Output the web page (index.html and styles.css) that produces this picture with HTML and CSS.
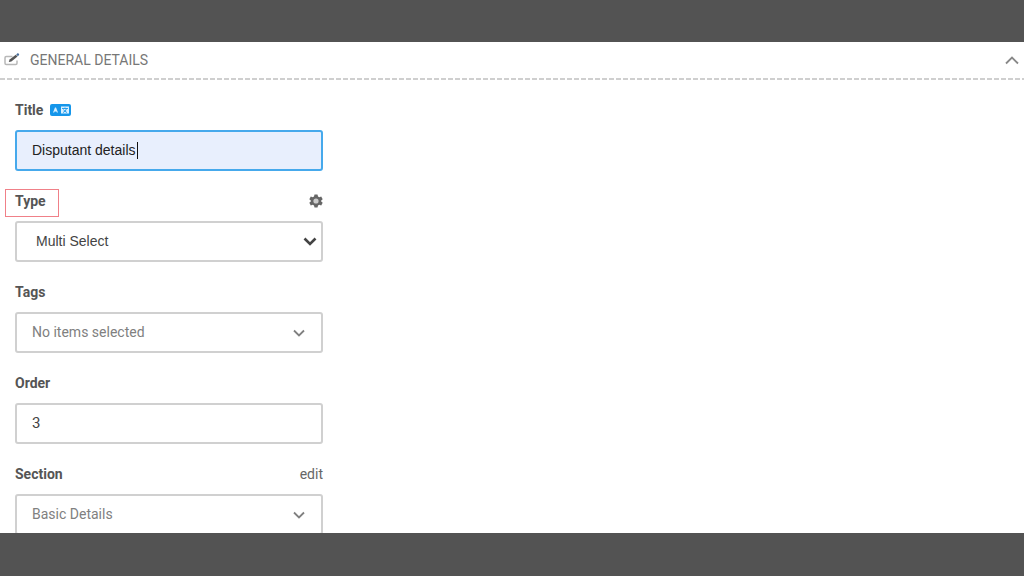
FILE: index.html
```html
<!DOCTYPE html>
<html lang="en">
<head>
<meta charset="utf-8">
<title>General details</title>
<link rel="stylesheet" href="styles.css">
</head>
<body>
<main class="panel">
  <header class="panel-header">
    <svg class="icon-edit" width="16" height="14" viewBox="0 0 16 14" aria-hidden="true">
      <path d="M8.500 3.500H2.200Q1 3.500 1 4.700V10.300Q1 11.500 2.200 11.500H11.800Q13 11.500 13 10.300V7.500" fill="none" stroke="#b8b8b8" stroke-width="1.500"/>
      <path d="M4.800 9L5.600 6.500L11.800 1.700L13.500 3.500L7.400 8.400Z" fill="#555"/>
      <path d="M12.200 1.400L13.500.3Q14.200 0 14.900.8Q15.500 1.600 15 2.100L13.900 3.200Z" fill="#496f9c"/>
    </svg>
    <h1 class="panel-title">GENERAL DETAILS</h1>
    <button class="collapse" type="button" aria-label="Collapse">
      <svg width="14" height="9" viewBox="0 0 14 9"><path d="M1 7.500L7 1.500L13 7.500" fill="none" stroke="#888" stroke-width="1.800"/></svg>
    </button>
  </header>
  <form class="form">
    <div class="field">
      <div class="label-row">
        <label class="label" for="title">Title</label>
        <svg class="icon-translate" width="21" height="13" viewBox="0 0 21 13" aria-hidden="true">
          <rect width="21" height="12" rx="2" fill="#1596ea"/>
          <path d="M3 8.500L5 3.500H6L8 8.500H6.800L6.400 7.500H4.600L4.200 8.500Z" fill="#d9efff"/>
          <rect x="11" y="2.500" width="8" height="7" fill="#d9efff"/>
          <path d="M12 4.500H18M15 3.500V4.500M13 8.500Q16 7.500 16.500 4.500M13.500 5.500Q14.500 7.500 17 8.500" fill="none" stroke="#1596ea" stroke-width=".9"/>
        </svg>
      </div>
      <div class="control">
        <input class="box box-active" id="title" type="text" value="Disputant details">
        <span class="caret"></span>
      </div>
    </div>
    <div class="field">
      <div class="label-row">
        <label class="label label-marked" for="type">Type</label>
        <button class="row-action" type="button" aria-label="Type settings">
          <svg width="14" height="14" viewBox="0 0 14 14">
            <path d="M5.500.5H8.500L9 2.500L10.300 3.200L12.200 2.600L13.700 5.200L12.200 6.600V7.400L13.700 8.800L12.200 11.400L10.300 10.800L9 11.500L8.500 13.500H5.500L5 11.500L3.700 10.800L1.800 11.400L.3 8.800L1.800 7.400V6.600L.3 5.200L1.800 2.600L3.700 3.200L5 2.500Z" fill="#666"/>
            <circle cx="7" cy="7" r="2.600" fill="#ccc"/>
          </svg>
        </button>
      </div>
      <div class="control">
        <select class="box box-select" id="type"><option>Multi Select</option></select>
        <svg class="arrow arrow-native" width="14" height="9" viewBox="0 0 14 9" aria-hidden="true"><path d="M1.500 1.500L7 7L12.500 1.500" fill="none" stroke="#444" stroke-width="2.600"/></svg>
      </div>
    </div>
    <div class="field">
      <div class="label-row"><label class="label" for="tags">Tags</label></div>
      <div class="control">
        <select class="box box-picker" id="tags"><option>No items selected</option></select>
        <svg class="arrow arrow-picker" width="12" height="8" viewBox="0 0 12 8" aria-hidden="true"><path d="M1 1.500L6 6.500L11 1.500" fill="none" stroke="#808080" stroke-width="1.800"/></svg>
      </div>
    </div>
    <div class="field">
      <div class="label-row"><label class="label" for="order">Order</label></div>
      <div class="control"><input class="box box-order" id="order" type="text" inputmode="numeric" value="3"></div>
    </div>
    <div class="field">
      <div class="label-row">
        <label class="label" for="section">Section</label>
        <a class="row-action" href="#section">edit</a>
      </div>
      <div class="control">
        <select class="box box-picker" id="section"><option>Basic Details</option></select>
        <svg class="arrow arrow-picker" width="12" height="8" viewBox="0 0 12 8" aria-hidden="true"><path d="M1 1.500L6 6.500L11 1.500" fill="none" stroke="#808080" stroke-width="1.800"/></svg>
      </div>
    </div>
  </form>
</main>
</body>
</html>
```

FILE: styles.css
```css
* {
  box-sizing: border-box;
}

body {
  display: flex;
  flex-direction: column;
  height: 100vh;
  margin: 0;
  padding: 42px 0 43px;
  background: #535353;
  font-family: Roboto, sans-serif;
  font-size: 14px;
  color: #555;
}

button {
  display: flex;
  padding: 0;
  border: 0;
  background: none;
}

.panel {
  flex: 1;
  min-height: 0;
  overflow: hidden;
  background: #fff;
}

.panel-header {
  display: flex;
  align-items: center;
  gap: 10px;
  padding: 7px 5px 9px 4px;
  background: repeating-linear-gradient(90deg, #cfcfcf 0 5px, #fff 5px 7px) bottom / 100% 2px no-repeat;
  line-height: 22px;
}

.panel-title {
  margin: 0;
  font-size: 14px;
  font-weight: 400;
  color: #777;
}

.collapse {
  margin-left: auto;
}

.form {
  display: flex;
  flex-direction: column;
  gap: 20px;
  width: 308px;
  max-width: calc(100% - 30px);
  margin: 20px 15px;
}

.field {
  display: flex;
  flex-direction: column;
  gap: 10px;
}

.label-row {
  display: flex;
  align-items: center;
  gap: 7px;
  line-height: 20px;
}

.label {
  font-weight: 700;
}

.label-marked {
  position: relative;
}

.label-marked::after {
  content: "";
  position: absolute;
  inset: -2px -13px -6px -10px;
  border: 1px solid #f08088;
}

.row-action {
  margin-left: auto;
  color: #666;
  text-decoration: none;
}

.control {
  position: relative;
}

.box {
  display: block;
  width: 100%;
  height: 41px;
  padding: 0 15px 1px;
  border: 2px solid #d0d0d0;
  border-radius: 3px;
  outline: 0;
  appearance: none;
  background: #fff;
  font-family: "Liberation Sans", Arial, sans-serif;
  font-size: 14px;
  color: #444;
}

.box-active {
  border-color: #46a9ec;
  background: #e8effd;
  color: #222;
}

.box-select {
  padding-left: 19px;
}

.box-picker {
  font-family: Roboto, sans-serif;
  color: #808080;
}

.box-order {
  font-family: Roboto, sans-serif;
  font-size: 15px;
}

.caret {
  position: absolute;
  top: 12px;
  left: 122px;
  width: 1px;
  height: 17px;
  background: #111;
}

.arrow {
  position: absolute;
  top: 16px;
  pointer-events: none;
}

.arrow-native {
  right: 6px;
}

.arrow-picker {
  top: 17px;
  right: 18px;
}
```
